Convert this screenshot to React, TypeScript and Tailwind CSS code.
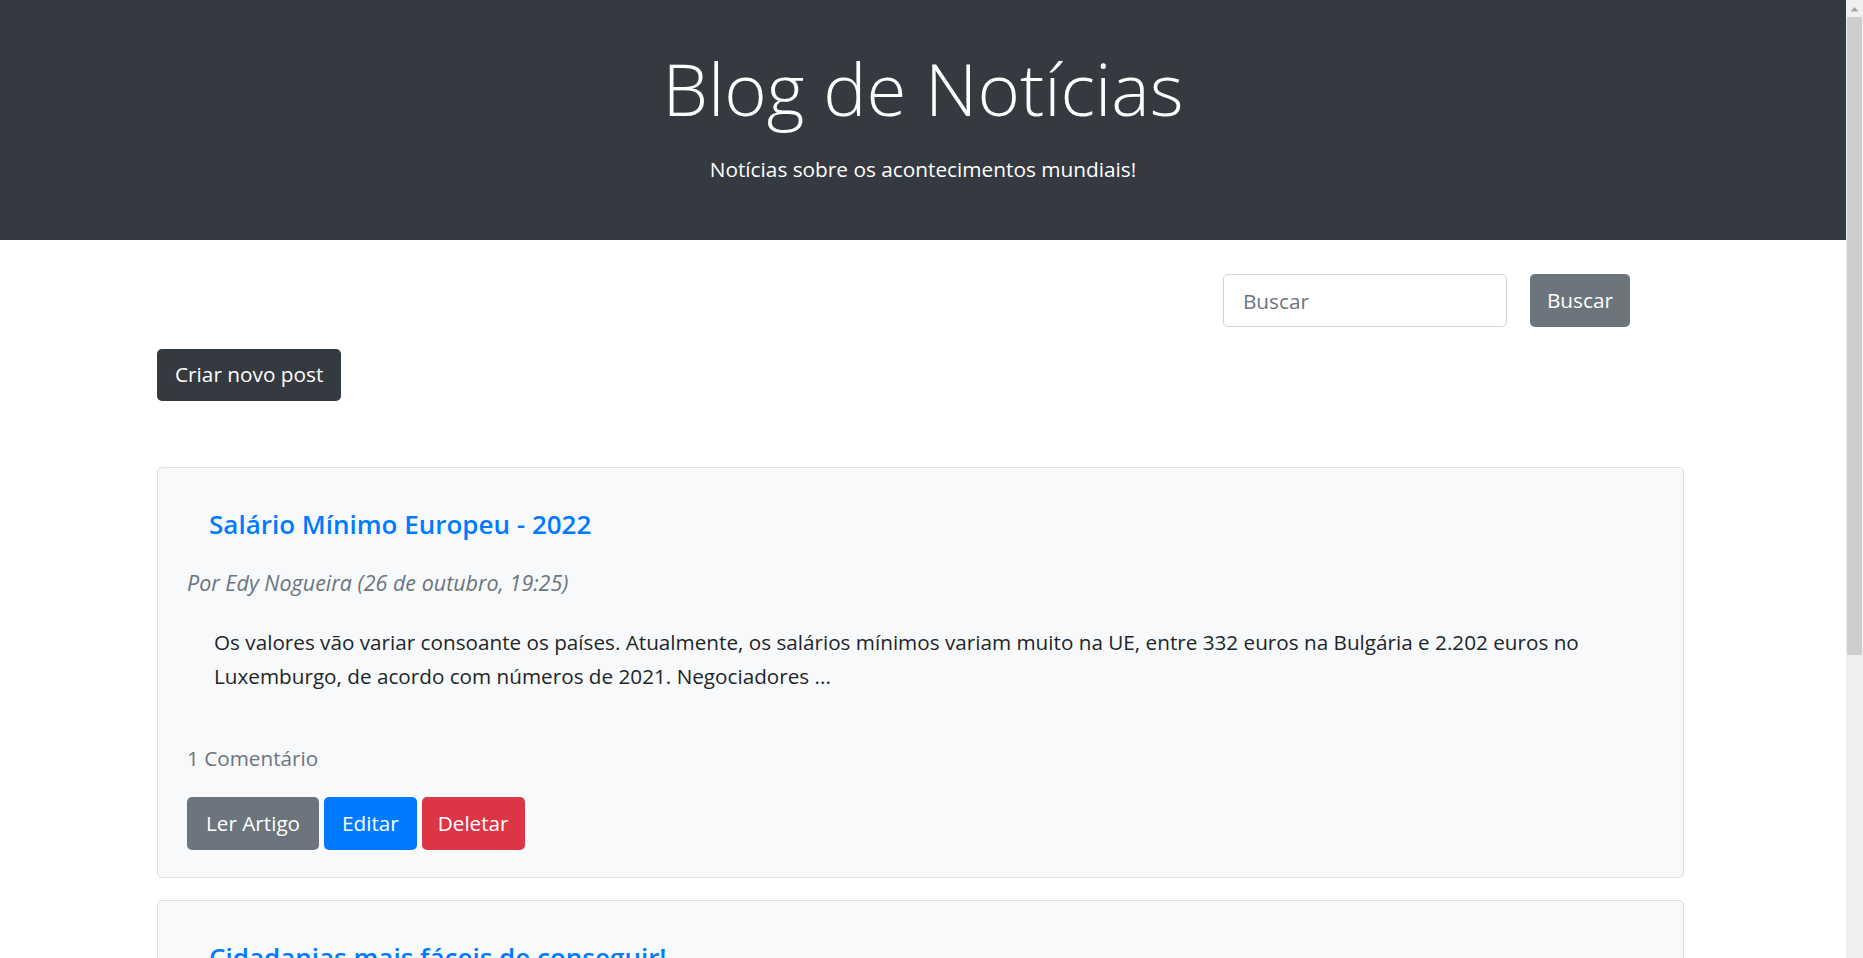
const posts = [
  {
    title: "Salário Mínimo Europeu - 2022",
    author: "Edy Nogueira",
    date: "26 de outubro, 19:25",
    body: "Os valores vão variar consoante os países. Atualmente, os salários mínimos variam muito na UE, entre 332 euros na Bulgária e 2.202 euros no Luxemburgo, de acordo com números de 2021. Negociadores ...",
    comments: "1 Comentário",
  },
  {
    title: "Cidadanias mais fáceis de conseguir!",
    author: "Edy Nogueira",
    date: "26 de outubro, 18:40",
    body: "Alguns países facilitam o processo de cidadania para estrangeiros e descendentes. Veja quais são as opções mais simples para quem deseja uma segunda nacionalidade ...",
    comments: "0 Comentários",
  },
];

function Scrollbar() {
  return (
    <div className="flex w-[17px] shrink-0 flex-col bg-[#f0f0f0]">
      <div className="flex h-[17px] items-center justify-center">
        <svg width="9" height="6" viewBox="0 0 9 6">
          <path d="M0.5 5.5 L4.5 1 L8.5 5.5 Z" fill="#a3a3a3" />
        </svg>
      </div>
      <div className="mx-px h-[638px] bg-[#cdcdcd]" />
    </div>
  );
}

export default function App() {
  return (
    <div className="flex h-[958px] overflow-hidden bg-white font-['Open_Sans',sans-serif]">
      <div className="min-w-0 flex-1 overflow-hidden">
        <header className="h-[240px] bg-[#343a40] pt-[53px] text-center text-white">
          <h1 className="text-[72.5px] font-light leading-[70px]">Blog de Notícias</h1>
          <p className="mt-[31px] text-[20.8px] leading-[30px]">
            Notícias sobre os acontecimentos mundiais!
          </p>
        </header>

        <main className="ml-[157px] w-[1527px]">
          <form className="mt-[34px] flex justify-end gap-[23px] pr-[54px]">
            <input
              type="search"
              placeholder="Buscar"
              className="h-[53px] w-[284px] rounded-[5px] border border-[#ced4da] bg-white px-[19px] text-[20.8px] text-[#495057] outline-none placeholder:text-[#6c757d]"
            />
            <button
              type="button"
              className="h-[53px] rounded-[5px] bg-[#6c757d] px-[17px] text-[20.8px] text-white"
            >
              Buscar
            </button>
          </form>

          <button className="mt-[22px] block h-[52px] rounded-[5px] bg-[#343a40] px-[18px] text-[20.8px] text-white">
            Criar novo post
          </button>

          <div className="mt-[66px] flex flex-col gap-[22px]">
            {posts.map((post) => (
              <article
                key={post.title}
                className="rounded-[5px] border border-[#dfdfdf] bg-[#f8f9fa] px-[29px] pt-[38px] pb-[27px]"
              >
                <h4 className="pl-[22px] text-[26px] font-semibold leading-[36px] text-[#007bff]">
                  {post.title}
                </h4>
                <p className="mt-[24px] text-[21.5px] italic leading-[34px] text-[#6c757d]">
                  Por {post.author} ({post.date})
                </p>
                <p className="mt-[25px] px-[27px] text-[20.7px] leading-[34px] text-[#212529]">
                  {post.body}
                </p>
                <p className="mt-[48px] text-[20.7px] leading-[34px] text-[#6c757d]">
                  {post.comments}
                </p>
                <div className="mt-[22px] flex gap-[5px]">
                  <button className="h-[53px] rounded-[5px] bg-[#6c757d] px-[19px] text-[20.7px] text-white">
                    Ler Artigo
                  </button>
                  <button className="h-[53px] rounded-[5px] bg-[#007bff] px-[18px] text-[20.7px] text-white">
                    Editar
                  </button>
                  <button className="h-[53px] rounded-[5px] bg-[#dc3545] px-[16px] text-[20.7px] text-white">
                    Deletar
                  </button>
                </div>
              </article>
            ))}
          </div>
        </main>
      </div>
      <Scrollbar />
    </div>
  );
}
